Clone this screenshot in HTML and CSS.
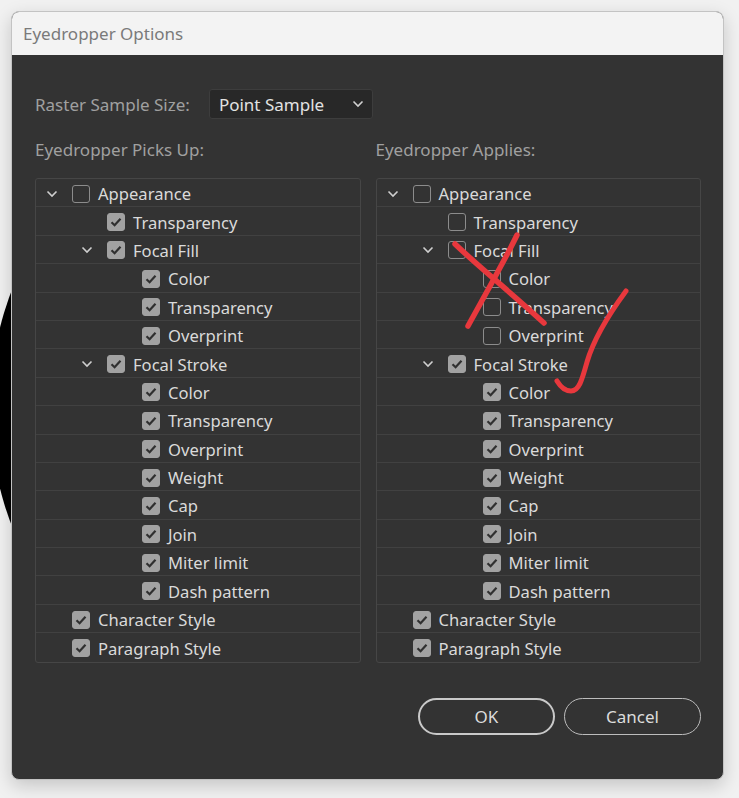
FILE: index.html
```html
<!DOCTYPE html>
<html>
<head>
<meta charset="utf-8">
<link rel="stylesheet" href="styles.css">
</head>
<body>
<div class="blob"></div>
<div class="window">
  <div class="titlebar">Eyedropper Options</div>
  <div class="content">
    <div class="raster">
      <span class="label">Raster Sample Size:</span>
      <div class="select">
        <span>Point Sample</span>
        <svg class="sel-chev" width="12" height="8" viewBox="0 0 12 8"><path d="M1.5 1.5 L6 6 L10.5 1.5" fill="none" stroke="#d0d0d0" stroke-width="1.6"/></svg>
      </div>
    </div>
    <div class="columns">
      <div class="col">
        <div class="heading">Eyedropper Picks Up:</div>
        <div class="tree" id="left"></div>
      </div>
      <div class="col">
        <div class="heading">Eyedropper Applies:</div>
        <div class="tree" id="right"></div>
      </div>
    </div>
    <div class="buttons">
      <button class="btn default">OK</button>
      <button class="btn">Cancel</button>
    </div>
  </div>
</div>
<svg class="marks" width="739" height="798" viewBox="0 0 739 798">
  <path d="M455 244 C 480 268, 515 296, 544 323" fill="none" stroke="#e8383d" stroke-width="5.5" stroke-linecap="round"/>
  <path d="M517 235 C 505 260, 485 295, 468 326" fill="none" stroke="#e8383d" stroke-width="5.5" stroke-linecap="round"/>
  <path d="M626 291 C 612 310, 594 338, 587 362 C 582 380, 579 391, 571 391 C 565 391, 560 386, 557 381" fill="none" stroke="#e8383d" stroke-width="5" stroke-linecap="round"/>
</svg>
<script src="app.js"></script>
</body>
</html>
```
FILE: app.js
```js
const base = [
  [0, true, 'Appearance'],
  [1, false, 'Transparency'],
  [1, true, 'Focal Fill'],
  [2, false, 'Color'],
  [2, false, 'Transparency'],
  [2, false, 'Overprint'],
  [1, true, 'Focal Stroke'],
  [2, false, 'Color'],
  [2, false, 'Transparency'],
  [2, false, 'Overprint'],
  [2, false, 'Weight'],
  [2, false, 'Cap'],
  [2, false, 'Join'],
  [2, false, 'Miter limit'],
  [2, false, 'Dash pattern'],
  [0, false, 'Character Style'],
  [0, false, 'Paragraph Style']
];
const leftChecked = [0,1,1,1,1,1,1,1,1,1,1,1,1,1,1,1,1];
const rightChecked = [0,0,0,0,0,0,1,1,1,1,1,1,1,1,1,1,1];
const chev = '<svg width="12" height="8" viewBox="0 0 12 8"><path d="M1.5 1.5 L6 6 L10.5 1.5" fill="none" stroke="#cfcfcf" stroke-width="1.6"/></svg>';
const tick = '<svg width="18" height="18" viewBox="0 0 18 18"><path d="M4.5 9.2 L7.6 12.2 L13.5 5.8" fill="none" stroke="#303030" stroke-width="2.2"/></svg>';
function build(id, checked) {
  const el = document.getElementById(id);
  base.forEach((r, i) => {
    const row = document.createElement('div');
    row.className = 'row';
    row.innerHTML =
      '<span class="indent lv' + r[0] + '"></span>' +
      '<span class="chev">' + (r[1] ? chev : '') + '</span>' +
      '<span class="cb' + (checked[i] ? ' on' : '') + '">' + (checked[i] ? tick : '') + '</span>' +
      '<span class="txt">' + r[2] + '</span>';
    el.appendChild(row);
  });
}
build('left', leftChecked);
build('right', rightChecked);
```
FILE: styles.css
```css
html, body {
  margin: 0;
  padding: 0;
}
body {
  width: 739px;
  height: 798px;
  background: #f1f1f1;
  position: relative;
  overflow: hidden;
  font-family: "Noto Sans", "Open Sans", sans-serif;
}
.blob {
  position: absolute;
  left: -10px;
  top: 78px;
  width: 660px;
  height: 660px;
  border-radius: 50%;
  background: #000;
}
.window {
  position: absolute;
  left: 11px;
  top: 11px;
  width: 713px;
  height: 769px;
  box-sizing: border-box;
  border: 1px solid #c3c3c3;
  border-radius: 8px;
  overflow: hidden;
  background: #333333;
  box-shadow: 0 6px 18px rgba(0,0,0,0.18);
  display: flex;
  flex-direction: column;
}
.titlebar {
  height: 43px;
  background: #f3f3f3;
  color: #7a7a7a;
  font-size: 17px;
  line-height: 43px;
  padding-left: 11px;
  flex: none;
}
.content {
  flex: 1;
  padding: 34px 22px 0 23px;
  display: flex;
  flex-direction: column;
}
.raster {
  display: flex;
  align-items: center;
  gap: 19px;
  height: 30px;
}
.label, .heading {
  color: #a0a0a0;
  font-size: 17px;
}
.select {
  width: 164px;
  height: 30px;
  box-sizing: border-box;
  background: #282828;
  border: 1px solid #3d3d3d;
  border-radius: 3px;
  display: flex;
  align-items: center;
  justify-content: space-between;
  padding: 0 8px 0 9px;
  color: #e2e2e2;
  font-size: 17px;
}
.columns {
  display: flex;
  gap: 15px;
  margin-top: 21px;
}
.col {
  flex: 1;
  display: flex;
  flex-direction: column;
}
.heading {
  height: 20px;
  line-height: 20px;
  margin-bottom: 18px;
}
.tree {
  border: 1px solid #464646;
  border-radius: 3px;
}
.row {
  height: 28.4px;
  box-sizing: border-box;
  border-bottom: 1px solid #414141;
  padding-top: 2px;
  display: flex;
  align-items: center;
}
.row:last-child {
  border-bottom: none;
}
.indent { flex: none; }
.lv0 { width: 0; }
.lv1 { width: 35px; }
.lv2 { width: 70px; }
.chev {
  width: 36px;
  flex: none;
  display: flex;
  align-items: center;
  padding-left: 10px;
  box-sizing: border-box;
}
.chev svg { display: block; }
.cb {
  width: 18px;
  height: 18px;
  box-sizing: border-box;
  border: 1px solid #8c8c8c;
  border-radius: 3px;
  flex: none;
  position: relative;
}
.cb.on {
  background: #a2a2a2;
  border-color: #a2a2a2;
}
.cb svg {
  position: absolute;
  left: -1px;
  top: -1px;
}
.txt {
  margin-left: 8px;
  color: #dadada;
  font-size: 16.6px;
  white-space: nowrap;
}
.buttons {
  display: flex;
  justify-content: flex-end;
  gap: 9px;
  margin-top: 35px;
}
.btn {
  height: 37px;
  box-sizing: border-box;
  border-radius: 19px;
  background: transparent;
  color: #dcdcdc;
  font-family: "Noto Sans", "Open Sans", sans-serif;
  font-size: 17px;
  border: 1px solid #bdbdbd;
  width: 137px;
}
.btn.default {
  border: 2px solid #c9c9c9;
  width: 137px;
}
.marks {
  position: absolute;
  left: 0;
  top: 0;
  pointer-events: none;
}
```
